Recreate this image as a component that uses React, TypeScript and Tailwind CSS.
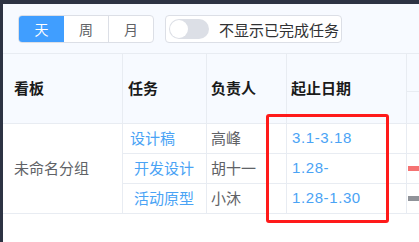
import React from "react";

const font = { fontFamily: '"Noto Sans CJK SC", "Noto Sans", sans-serif' };
const numFont = { fontFamily: '"Liberation Sans", Arial, sans-serif' };

const rows = [
  { task: "设计稿", pad: "pl-[7px]", owner: "高峰", date: "3.1-3.18", bar: "" },
  { task: "开发设计", pad: "pl-[11px]", owner: "胡十一", date: "1.28-", bar: "bg-[#f57272]" },
  { task: "活动原型", pad: "pl-[11px]", owner: "小沐", date: "1.28-1.30", bar: "bg-[#909399]" },
];

const App = () => {
  return (
    <div
      className="relative h-[242px] w-[419px] overflow-hidden bg-[#2d3343] pl-[3px] pt-[4px]"
      style={font}
    >
      <div className="flex h-full flex-col bg-[#f7faff]">
        {/* toolbar */}
        <div className="flex h-[49px] shrink-0 items-start gap-[11px] pl-[15px] pt-[11px]">
          <div className="flex h-[28px] overflow-hidden rounded-[4px] border border-[#dcdfe6] bg-white text-[14px]">
            <div className="flex w-[45px] items-center justify-center bg-[#409eff] text-white">天</div>
            <div className="flex w-[45px] items-center justify-center border-r border-[#dcdfe6] text-[#606266]">周</div>
            <div className="flex w-[44px] items-center justify-center text-[#606266]">月</div>
          </div>
          <div className="flex h-[28px] w-[177px] items-center gap-[10px] rounded-[4px] border border-[#dcdfe6] bg-white pl-[3px]">
            <div className="flex h-[20px] w-[40px] items-center rounded-full bg-[#dcdfe6] px-[1px]">
              <div className="h-[18px] w-[18px] rounded-full bg-white" />
            </div>
            <span className="text-[15px] leading-none text-[#303133]">不显示已完成任务</span>
          </div>
        </div>

        {/* table */}
        <div className="flex flex-1 flex-col border-t border-[#e8ecf2]">
          <div className="flex h-[70px] shrink-0 border-b border-[#e8ecf2] text-[15px] font-bold text-[#1a1a1a]">
            <div className="flex w-[120px] items-center border-r border-[#e8ecf2] pl-[11px]">看板</div>
            <div className="flex w-[84px] items-center border-r border-[#e8ecf2] pl-[5px]">任务</div>
            <div className="flex w-[80px] items-center border-r border-[#e8ecf2] pl-[4px]">负责人</div>
            <div className="flex w-[120px] items-center border-r border-[#e8ecf2] pl-[4px]">起止日期</div>
            <div className="flex flex-1 flex-col">
              <div className="h-[38px] border-b border-[#e8ecf2]" />
              <div className="flex-1" />
            </div>
          </div>
          <div className="flex shrink-0 bg-white text-[15px]">
            <div className="flex w-[120px] items-center border-r border-b border-[#e8ecf2] pl-[11px] text-[#606266]">
              未命名分组
            </div>
            <div className="flex flex-1 flex-col">
              {rows.map((r) => (
                <div key={r.task} className="flex h-[30px] border-b border-[#e8ecf2]">
                  <div className={`flex w-[84px] items-center border-r border-[#e8ecf2] text-[#4aa3f5] ${r.pad}`}>
                    {r.task}
                  </div>
                  <div className="flex w-[80px] items-center border-r border-[#e8ecf2] pl-[4px] text-[#606266]">
                    {r.owner}
                  </div>
                  <div
                    className="flex w-[120px] items-center border-r border-[#e8ecf2] pl-[5px] tracking-[0.6px] text-[#4aa3f5]"
                    style={numFont}
                  >
                    {r.date}
                  </div>
                  <div className="flex flex-1 items-center pl-[1px]">
                    {r.bar && <div className={`h-[5px] w-full ${r.bar}`} />}
                  </div>
                </div>
              ))}
            </div>
          </div>
          <div className="flex-1 bg-white" />
        </div>
      </div>

      {/* annotation */}
      <div className="absolute left-[266px] top-[114px] h-[109px] w-[123px] rounded-[3px] border-[3px] border-[#ff1a1a]" />
    </div>
  );
};

export default App;
